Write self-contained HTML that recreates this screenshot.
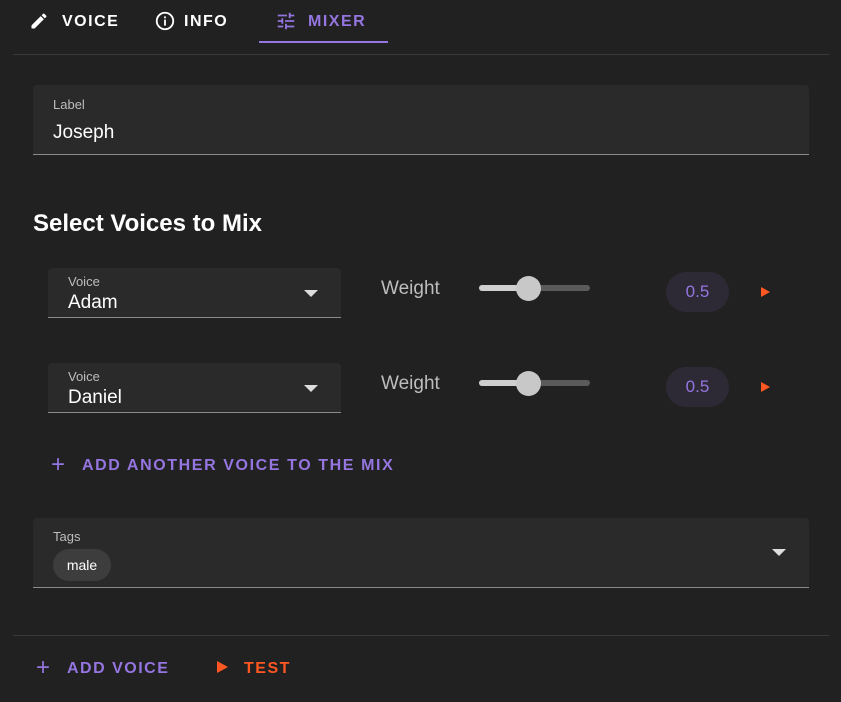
<!DOCTYPE html>
<html><head><style>
*{margin:0;padding:0;box-sizing:border-box}
body{width:841px;height:702px;background:#212121;font-family:"Liberation Sans",sans-serif;color:#fff;position:relative;overflow:hidden}
.a{position:absolute}
.tab{font-weight:bold;font-size:16px;letter-spacing:1.5px;top:13px}
.field{background:#2a2a2a;border-bottom:1px solid #8a8a8a;border-radius:4px 4px 0 0}
.lbl{font-size:13px;color:#bdbdbd}
.purple{color:#9575e0}
</style></head><body>
<svg class="a" style="left:29px;top:11px" width="20" height="20" viewBox="0 0 24 24"><path fill="#fff" d="M3 17.25V21h3.75L17.81 9.94l-3.75-3.75L3 17.25zM20.71 7.04a1 1 0 000-1.41l-2.34-2.34a1 1 0 00-1.41 0l-1.83 1.83 3.75 3.75 1.83-1.83z"/></svg>
<div class="a tab" style="left:62px">VOICE</div>
<svg class="a" style="left:154px;top:10px" width="22" height="22" viewBox="0 0 24 24"><circle cx="12" cy="12" r="9" fill="none" stroke="#fff" stroke-width="2"/><rect x="11" y="10.5" width="2" height="6.5" fill="#fff"/><rect x="11" y="7" width="2" height="2" fill="#fff"/></svg>
<div class="a tab" style="left:184px">INFO</div>
<svg class="a" style="left:275px;top:10px" width="22" height="22" viewBox="0 0 24 24"><path fill="#9575e0" d="M3 17v2h6v-2H3zM3 5v2h10V5H3zm10 16v-2h8v-2h-8v-2h-2v6h2zM7 9v2H3v2h4v2h2V9H7zm14 4v-2H11v2h10zm-6-4h2V7h4V5h-4V3h-2v6z"/></svg>
<div class="a tab purple" style="left:308px">MIXER</div>
<div class="a" style="left:259px;top:41px;width:129px;height:2px;background:#9575e0"></div>
<div class="a" style="left:13px;top:54px;width:816px;height:1px;background:#3a3a3a"></div>

<div class="a field" style="left:33px;top:85px;width:776px;height:70px"></div>
<div class="a lbl" style="left:53px;top:97px">Label</div>
<div class="a" style="left:53px;top:122px;font-size:19px">Joseph</div>

<div class="a" style="left:33px;top:210px;font-size:24px;font-weight:bold">Select Voices to Mix</div>

<div class="a field" style="left:48px;top:268px;width:293px;height:50px"></div>
<div class="a lbl" style="left:68px;top:274px">Voice</div>
<div class="a" style="left:68px;top:292px;font-size:19px">Adam</div>
<div class="a" style="left:304px;top:290px;border-left:7px solid transparent;border-right:7px solid transparent;border-top:7px solid #ddd"></div>
<div class="a" style="left:381px;top:278px;font-size:19px;color:#bdbdbd">Weight</div>
<div class="a" style="left:479px;top:285px;width:111px;height:6px;border-radius:3px;background:#5a5a5a"></div>
<div class="a" style="left:479px;top:285px;width:50px;height:6px;border-radius:3px;background:#cfcfcf"></div>
<div class="a" style="left:516px;top:276px;width:25px;height:25px;border-radius:50%;background:#c8c8c8"></div>
<div class="a" style="left:666px;top:272px;width:63px;height:40px;border-radius:20px;background:#2d2a36;color:#9575e0;font-size:17px;text-align:center;line-height:40px">0.5</div>
<div class="a" style="left:761px;top:287px;border-top:5px solid transparent;border-bottom:5px solid transparent;border-left:9px solid #ff5722"></div>

<div class="a field" style="left:48px;top:363px;width:293px;height:50px"></div>
<div class="a lbl" style="left:68px;top:369px">Voice</div>
<div class="a" style="left:68px;top:387px;font-size:19px">Daniel</div>
<div class="a" style="left:304px;top:385px;border-left:7px solid transparent;border-right:7px solid transparent;border-top:7px solid #ddd"></div>
<div class="a" style="left:381px;top:373px;font-size:19px;color:#bdbdbd">Weight</div>
<div class="a" style="left:479px;top:380px;width:111px;height:6px;border-radius:3px;background:#5a5a5a"></div>
<div class="a" style="left:479px;top:380px;width:50px;height:6px;border-radius:3px;background:#cfcfcf"></div>
<div class="a" style="left:516px;top:371px;width:25px;height:25px;border-radius:50%;background:#c8c8c8"></div>
<div class="a" style="left:666px;top:367px;width:63px;height:40px;border-radius:20px;background:#2d2a36;color:#9575e0;font-size:17px;text-align:center;line-height:40px">0.5</div>
<div class="a" style="left:761px;top:382px;border-top:5px solid transparent;border-bottom:5px solid transparent;border-left:9px solid #ff5722"></div>

<div class="a purple" style="left:51px;top:453px;font-size:24px;line-height:24px">+</div>
<div class="a purple" style="left:82px;top:457px;font-size:16px;font-weight:bold;letter-spacing:1.6px">ADD ANOTHER VOICE TO THE MIX</div>

<div class="a field" style="left:33px;top:518px;width:776px;height:70px"></div>
<div class="a lbl" style="left:53px;top:529px">Tags</div>
<div class="a" style="left:53px;top:549px;width:58px;height:32px;border-radius:16px;background:#3d3d3d;font-size:14px;text-align:center;line-height:32px">male</div>
<div class="a" style="left:772px;top:549px;border-left:7px solid transparent;border-right:7px solid transparent;border-top:7px solid #ddd"></div>

<div class="a" style="left:13px;top:635px;width:816px;height:1px;background:#3a3a3a"></div>
<div class="a purple" style="left:36px;top:656px;font-size:24px;line-height:24px">+</div>
<div class="a purple" style="left:67px;top:660px;font-size:16px;font-weight:bold;letter-spacing:1.5px">ADD VOICE</div>
<div class="a" style="left:217px;top:661px;border-top:6px solid transparent;border-bottom:6px solid transparent;border-left:11px solid #ff5722"></div>
<div class="a" style="left:244px;top:660px;font-size:16px;font-weight:bold;letter-spacing:1.5px;color:#ff5722">TEST</div>
</body></html>
